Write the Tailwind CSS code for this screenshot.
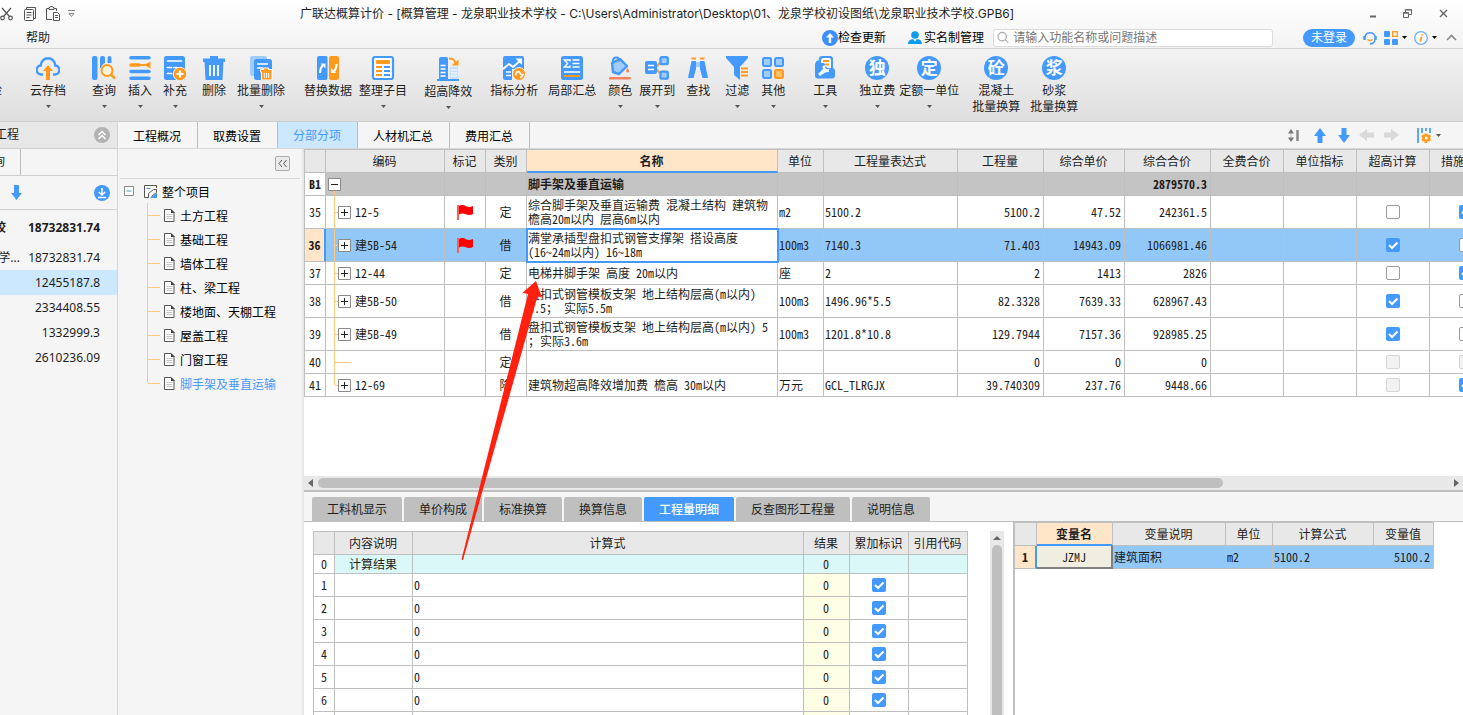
<!DOCTYPE html>
<html lang="zh-CN">
<head>
<meta charset="utf-8">
<title>广联达概算计价</title>
<script src="https://cdn.jsdelivr.net/npm/@tailwindcss/browser@4"></script>
</head>
<body class="h-screen overflow-hidden bg-[#f5f5f5] text-[12px] leading-4 text-[#1e1e1e] font-['Noto_Sans','Noto_Sans_CJK_SC',sans-serif]">

<!-- Shared symbols -->
<svg width="0" height="0" class="hidden">
  <symbol id="caret" viewBox="0 0 5 3"><path d="M0 0h5L2.500 3z" fill="currentColor"/></symbol>
  <symbol id="tick" viewBox="0 0 14 14"><path d="M3 7l3 3 5.500-5.500" fill="none" stroke="#fff" stroke-width="2"/></symbol>
  <symbol id="doc" viewBox="0 0 11 13"><path d="M.5.5h6.500l3 3v9H.5z" fill="#fff" stroke="#555"/><path d="M7 0v4h4z" fill="#444"/><path d="M2.500 5.500h6M2.500 7.500h6M2.500 9.500h6" stroke="#c4c4c4"/></symbol>
  <symbol id="flag" viewBox="0 0 16 16"><path d="M0 1h2v15H0z" fill="#ff5a5a"/><path d="M2 2c2-1.500 5-1 7 .2s5 .8 7-.2v8c-2 1.200-5 1.500-7 .3S4 9 2 10.500z" fill="red"/></symbol>
  <symbol id="plus" viewBox="0 0 13 13"><path d="M.5.5h12v12H.5z" fill="#fff" stroke="#8a8a8a"/><path d="M3 6.500h7M6.500 3v7" stroke="#222"/></symbol>
  <symbol id="minus" viewBox="0 0 13 13"><path d="M.5.5h12v12H.5z" fill="#fff" stroke="#8a8a8a"/><path d="M3 6.500h7" stroke="#222"/></symbol>
</svg>

<div class="flex h-full flex-col">

<!-- Title bar and menu -->
<header class="shrink-0 border-b border-[#d2d2d2] bg-linear-to-b from-white to-[#f3f3f3]">
  <div class="flex h-[27px] items-center">
    <div class="flex w-[300px] shrink-0 items-center">
      <svg width="13" height="14" viewBox="0 0 13 14" fill="none" stroke="#555" stroke-width="1.200"><path d="M2 1l7.500 8.500M11 1L3.500 9.500"/><circle cx="2.500" cy="11" r="1.800"/><circle cx="10.500" cy="11" r="1.800"/></svg>
      <svg class="ml-[11px]" width="12" height="14" viewBox="0 0 12 14" fill="none" stroke="#555"><path d="M2.500 2.500v-2h9v11h-2"/><rect x=".5" y="2.500" width="9" height="11" rx="1"/><path d="M2.500 5.500h5M2.500 8h5M2.500 10.500h3"/></svg>
      <svg class="ml-[10px]" width="14" height="15" viewBox="0 0 14 15" fill="none" stroke="#555"><path d="M6 13.500H.5v-11H3m5 0h2.500V5"/><path d="M3 3.500h5v-2H7l-.5-1h-2l-.5 1H3zM7.500 6.500h4l2 2v6h-6z"/><path d="M9 9.500h3M9 11.500h3"/></svg>
      <svg class="ml-2" width="7" height="8" viewBox="0 0 7 8" fill="none" stroke="#888"><path d="M0 .5h7M1 3.500l2.500 3 2.500-3z"/></svg>
    </div>
    <h1 class="whitespace-nowrap font-['Inter','Noto_Sans_CJK_SC',sans-serif]">广联达概算计价 - [概算管理 - 龙泉职业技术学校 - C:\Users\Administrator\Desktop\01、龙泉学校初设图纸\龙泉职业技术学校.GPB6]</h1>
    <div class="ml-auto flex items-center gap-[27px] pr-[15px] text-[#666]">
      <button aria-label="最小化"><svg width="6" height="8" viewBox="0 0 6 8"><path d="M0 6.500h6" stroke="currentColor" stroke-width="2"/></svg></button>
      <button aria-label="还原"><svg width="9" height="9" viewBox="0 0 9 9" fill="none" stroke="currentColor"><path d="M2.500 3V.5h6v5H6M2.500 1h6"/><path d="M.5 3.500h5v5h-5zM.5 4.200h5"/></svg></button>
      <button aria-label="关闭"><svg width="9" height="9" viewBox="0 0 9 9" stroke="currentColor" stroke-width="1.400"><path d="M1 1l7 7M8 1L1 8"/></svg></button>
    </div>
  </div>
  <div class="flex h-[21px] items-center">
    <button class="ml-[26px]">帮助</button>
    <div class="ml-auto flex items-center pr-[6px] text-black">
      <button class="flex items-center whitespace-nowrap"><svg width="16" height="16" viewBox="0 0 16 16"><circle cx="8" cy="8" r="8" fill="#3b8fff"/><path d="M8 3l4 4.500H9.200V13H6.800V7.500H4z" fill="#fff"/></svg>检查更新</button>
      <button class="ml-[22px] flex items-center gap-[2px] whitespace-nowrap"><svg width="14" height="13" viewBox="0 0 14 13" fill="#0b9bf0"><circle cx="7" cy="4" r="3.800"/><path d="M0 13c0-3 2-4.500 5-5l2 2.500L9 8c3 .5 5 2 5 5z"/></svg>实名制管理</button>
      <label class="ml-[9px] flex h-[18px] w-[280px] items-center rounded-[3px] border border-[#dcdcdc] bg-white pl-[3px]">
        <svg width="13" height="13" viewBox="0 0 13 13" fill="none" stroke="#aaa" stroke-width="1.300"><circle cx="5.500" cy="5.500" r="4.500"/><path d="M9 9l3 3"/></svg>
        <input aria-label="搜索" class="ml-1 w-full bg-transparent placeholder:text-[#777]" placeholder="请输入功能名称或问题描述">
      </label>
      <button class="ml-[30px] h-[18px] w-[52px] rounded-full bg-[#4499fc] text-white">未登录</button>
      <button aria-label="客服" class="ml-2"><svg width="14" height="14" viewBox="0 0 14 14" fill="none"><path d="M2 5.500a5.200 5.200 0 0 1 10 0" stroke="#4499fc" stroke-width="1.500"/><path d="M1.500 5v4M12.500 5v4" stroke="#4499fc" stroke-width="2.500"/><path d="M12 9c-.6 2.500-2.500 3.800-5 4" stroke="#4499fc" stroke-width="1.500"/><path d="M4.500 8.500c1.500 1.200 3.500 1.200 5 0" stroke="#ff9a1e" stroke-width="1.500"/></svg></button>
      <button aria-label="应用" class="ml-[7px] flex items-center gap-1"><svg width="14" height="14" viewBox="0 0 14 14"><g fill="#4499fc"><rect width="6" height="6" rx="1"/><rect y="8" width="6" height="6" rx="1"/><rect x="8" y="8" width="6" height="6" rx="1"/></g><rect x="8.700" y=".7" width="4.600" height="4.600" fill="#fff" stroke="#ff9a1e" stroke-width="1.400"/></svg><svg width="5" height="3"><use href="#caret"/></svg></button>
      <button aria-label="关于" class="ml-[7px] flex items-center gap-1"><svg width="14" height="14" viewBox="0 0 14 14"><circle cx="7" cy="7" r="6.300" fill="#fff" stroke="#6bb0fd" stroke-width="1.300"/><path d="M8.500 3l-.3 1.500M7.600 5.700L6.500 10.500" stroke="#ff9a1e" stroke-width="1.800"/></svg><svg width="5" height="3"><use href="#caret"/></svg></button>
      <button aria-label="收起功能区" class="ml-[9px]"><svg width="11" height="7" viewBox="0 0 11 7" fill="none" stroke="#888" stroke-width="1.600"><path d="M1 6l4.500-4.500L10 6"/></svg></button>
    </div>
  </div>
</header>

<!-- Ribbon -->
<nav class="flex h-[73px] shrink-0 items-start overflow-hidden border-b border-[#cdcdcd] bg-linear-to-b from-[#f3f3f3] to-[#dedede] pt-[7px] whitespace-nowrap">
  <button class="flex w-[2px] shrink-0 flex-col items-end pt-[27px]"><span>项目自检</span></button>
  <button class="ml-7 flex shrink-0 flex-col items-center"><svg width="24" height="24" viewBox="0 0 24 24"><path d="M7 18.500H5.500A4.500 4.500 0 0 1 4.800 9.500a7.200 7.200 0 0 1 14.400 0 4.500 4.500 0 0 1-.7 9H17" fill="none" stroke="#4499fc" stroke-width="2.400"/><path d="M12 9l5 6h-3v9h-4v-9H7z" fill="#ff9a1e"/></svg><span class="mt-[3px]">云存档</span><svg class="mt-[6px] text-[#555]" width="5" height="3"><use href="#caret"/></svg></button>
  <button class="ml-[26px] flex shrink-0 flex-col items-center"><svg width="24" height="24" viewBox="0 0 24 24"><rect x="0" y="0" width="5.500" height="24" rx="2" fill="#4499fc"/><path d="M8 2q0-2 2-2h1q2 0 2 2v5q-3 1-4 5H8zM15.500 2q0-2 2-2 2 0 2 2v5h-4z" fill="#4499fc"/><circle cx="15" cy="14.500" r="5.500" fill="#fff3e0" stroke="#ff9a1e" stroke-width="2"/><path d="M19 18.500l4 4" stroke="#ff9a1e" stroke-width="2.500"/></svg><span class="mt-[3px]">查询</span><svg class="mt-[6px] text-[#555]" width="5" height="3"><use href="#caret"/></svg></button>
  <button class="ml-3 flex shrink-0 flex-col items-center"><svg width="24" height="24" viewBox="0 0 24 24"><path d="M3 1.800h18M3 15.500h18M3 22.200h18" stroke="#4499fc" stroke-width="3.500" stroke-linecap="round"/><path d="M3 9h8" stroke="#ff9a1e" stroke-width="3.500" stroke-linecap="round"/><path d="M22.500 5.500v7L16 9z" fill="#ff9a1e"/><path d="M11 9h6" stroke="#ff9a1e" stroke-width="2"/></svg><span class="mt-[3px]">插入</span><svg class="mt-[6px] text-[#555]" width="5" height="3"><use href="#caret"/></svg></button>
  <button class="ml-[11px] flex shrink-0 flex-col items-center"><svg width="24" height="24" viewBox="0 0 24 24"><rect x="1" y="0" width="21" height="24" rx="2.500" fill="#4499fc"/><path d="M4.500 5h14M4.500 11.500h4M11 11.500h3M4.500 17.500h4" stroke="#fff" stroke-width="1.700" stroke-linecap="round"/><circle cx="17" cy="18" r="6.700" fill="#ff9a1e" stroke="#f3f3f3"/><path d="M17 14.500v7M13.500 18h7" stroke="#fff" stroke-width="2.200"/></svg><span class="mt-[3px]">补充</span><svg class="mt-[6px] text-[#555]" width="5" height="3"><use href="#caret"/></svg></button>
  <button class="ml-[15px] flex shrink-0 flex-col items-center"><svg width="24" height="24" viewBox="0 0 24 24"><path d="M1 2.500h7V0h8v2.500h7v3.500H1zM2.500 5h19l-1 19h-17z" fill="#4499fc"/><path d="M8 9v11M12 9v11M16 9v11" stroke="#fff" stroke-width="1.800"/></svg><span class="mt-[3px]">删除</span></button>
  <button class="ml-[11px] flex shrink-0 flex-col items-center"><svg width="24" height="24" viewBox="0 0 24 24"><rect x="1" y="0" width="17" height="20" rx="2.500" fill="#9fcbfd"/><rect x="5" y="3" width="18" height="21" rx="2.500" fill="#4499fc"/><path d="M8 8h11M8 12h6" stroke="#fff" stroke-width="1.500"/><path d="M11.500 13.500h3V12h5v1.500h3.500V24H12.500V16h-1z" fill="#ff9a1e" stroke="#fff"/><path d="M15.300 17v5M17.500 17v5M19.700 17v5" stroke="#fff"/></svg><span class="mt-[3px]">批量删除</span><svg class="mt-[6px] text-[#555]" width="5" height="3"><use href="#caret"/></svg></button>
  <button class="ml-[19px] flex shrink-0 flex-col items-center"><svg width="24" height="24" viewBox="0 0 24 24"><rect x="1" width="10.500" height="24" rx="2" fill="#4499fc"/><rect x="13" width="10" height="24" rx="2" fill="#ff9a1e"/><path d="M4 17c0-4 1-6 3-8" fill="none" stroke="#fff" stroke-width="2"/><path d="M4.500 7.500h5v5z" fill="#fff"/><path d="M20.500 8c0 4-1 6-3 8" fill="none" stroke="#fff" stroke-width="2"/><path d="M15 12v5h5z" fill="#fff"/></svg><span class="mt-[3px]">替换数据</span></button>
  <button class="ml-[7px] flex shrink-0 flex-col items-center"><svg width="24" height="24" viewBox="0 0 24 24"><rect x="2" y="1" width="20" height="22" rx="2" fill="#fff" stroke="#4499fc" stroke-width="2.200"/><rect x="5" y="4" width="14" height="4" rx="1" fill="#ff9a1e"/><path d="M5 11h6M5 15h6M5 19h6" stroke="#ff9a1e" stroke-width="1.800"/><path d="M13 11h6M13 15h6M13 19h6" stroke="#4499fc" stroke-width="1.800"/></svg><span class="mt-[3px]">整理子目</span><svg class="mt-[6px] text-[#555]" width="5" height="3"><use href="#caret"/></svg></button>
  <button class="mt-px ml-[17px] flex shrink-0 flex-col items-center"><svg width="24" height="24" viewBox="0 0 24 24"><path d="M3 2q0-2 2-2h5q2 0 2 2v21H3zM1 22h22v2H1z" fill="#4499fc"/><path d="M4.500 8.500h5M4.500 12h5M4.500 15.500h5M4.500 19h5" stroke="#fff" stroke-width="1.700"/><path d="M14 10h8v12h-8z" fill="#c4e0fe"/><path d="M15 13h6M15 16h6M15 19h6" stroke="#fff"/><path d="M13 1.500c4 0 5.500 1 6.500 4.500" fill="none" stroke="#ff9a1e" stroke-width="2"/><path d="M22.500 2.500v6h-7z" fill="#ff9a1e"/></svg><span class="mt-[3px]">超高降效</span><svg class="mt-[6px] text-[#555]" width="5" height="3"><use href="#caret"/></svg></button>
  <button class="ml-[18px] flex shrink-0 flex-col items-center"><svg width="24" height="24" viewBox="0 0 24 24"><path d="M1 2q0-2 2-2h17q2 0 2 2v11H10v11H3q-2 0-2-2z" fill="#4499fc"/><path d="M1 13l6-5 4 3 7-6" fill="none" stroke="#fff" stroke-width="2"/><path d="M13.500 2.500H20V9z" fill="#fff"/><path d="M4 16h5M4 19.500h5" stroke="#fff" stroke-width="1.500"/><circle cx="17" cy="18" r="6.500" fill="#ff9a1e" stroke="#f3f3f3"/><path d="M14 19.500v-1.500c0-1.500 1-2.500 3-2.500l1.500 2.500c1 0 2 0 2.500.5-.5 2-1.500 2.500-3 3" fill="none" stroke="#fff" stroke-width="1.500"/></svg><span class="mt-[3px]">指标分析</span></button>
  <button class="ml-[10px] flex shrink-0 flex-col items-center"><svg width="24" height="24" viewBox="0 0 24 24"><rect x="1" width="22" height="24" rx="2.500" fill="#4499fc"/><path d="M10 5.500V4H4.500l3 3.500-3 3.500H10V9.500" fill="none" stroke="#fff" stroke-width="1.500"/><path d="M12.500 4h7M12.500 7.500h7M12.500 11h7M4 16h16" stroke="#fff" stroke-width="1.700"/><path d="M4 20h16" stroke="#ff9a1e" stroke-width="2"/></svg><span class="mt-[3px]">局部汇总</span></button>
  <button class="ml-3 flex shrink-0 flex-col items-center"><svg width="24" height="24" viewBox="0 0 24 24"><path d="M4 7l8-4 7 7-8 8-6-2z" fill="#9fcbfd" stroke="#4499fc" stroke-width="2.400" stroke-linejoin="round"/><path d="M5 8V4q1-3 4-2.500 2.500.5 2.500 4" fill="none" stroke="#4499fc" stroke-width="2"/><path d="M19.500 12q2.500 3 1.200 4.200-1.200.8-2.200-.2-1-1.200 1-4z" fill="#f5855f"/><rect x="1" y="21" width="22" height="2.600" rx="1.300" fill="#f5855f"/></svg><span class="mt-[3px]">颜色</span><svg class="mt-[6px] text-[#555]" width="5" height="3"><use href="#caret"/></svg></button>
  <button class="ml-[7px] flex shrink-0 flex-col items-center"><svg width="24" height="24" viewBox="0 0 24 24"><path d="M11 11l6-6M11 13l6 6" stroke="#ff9a1e" stroke-width="1.800"/><rect x="0" y="5" width="12" height="13" rx="2" fill="#4499fc"/><path d="M3 9.500h6M3 13.500h6" stroke="#fff" stroke-width="1.500"/><rect x="15.500" y="1.200" width="7.300" height="7" rx="1.500" fill="#9fcbfd" stroke="#4499fc" stroke-width="2.300"/><rect x="15.500" y="15.700" width="7.300" height="7" rx="1.500" fill="#9fcbfd" stroke="#4499fc" stroke-width="2.300"/></svg><span class="mt-[3px]">展开到</span><svg class="mt-[6px] text-[#555]" width="5" height="3"><use href="#caret"/></svg></button>
  <button class="ml-[11px] flex shrink-0 flex-col items-center"><svg width="24" height="24" viewBox="0 0 24 24"><path d="M5.500 5h4.500v8l-2.500 9H2zM18.500 5H14v8l2.500 9H22z" fill="#4499fc"/><path d="M5.500 2.500h4.500M14 2.500h4.500" stroke="#ff9a1e" stroke-width="2"/><path d="M10 6h4v5h-4z" fill="#9fcbfd"/></svg><span class="mt-[3px]">查找</span></button>
  <button class="ml-[15px] flex shrink-0 flex-col items-center"><svg width="24" height="24" viewBox="0 0 24 24"><path d="M1 0h22v2l-8 9v13l-6-5v-8L1 2z" fill="#4499fc"/><path d="M15 10h9v11h-9z" fill="#efefef"/><path d="M16 12.500h7M16 16h7M16 19.500h7" stroke="#ff9a1e" stroke-width="1.800"/></svg><span class="mt-[3px]">过滤</span><svg class="mt-[6px] text-[#555]" width="5" height="3"><use href="#caret"/></svg></button>
  <button class="ml-3 flex shrink-0 flex-col items-center"><svg width="24" height="24" viewBox="0 0 24 24" stroke-width="2"><g fill="#9fcbfd" stroke="#4499fc"><rect x="2" y="2" width="8" height="8" rx="1.500"/><rect x="14" y="2" width="8" height="8" rx="1.500"/><rect x="2" y="14" width="8" height="8" rx="1.500"/></g><rect x="14" y="14" width="8" height="8" rx="1.500" fill="#fdbf69" stroke="#ff9a1e"/></svg><span class="mt-[3px]">其他</span><svg class="mt-[6px] text-[#555]" width="5" height="3"><use href="#caret"/></svg></button>
  <button class="ml-7 flex shrink-0 flex-col items-center"><svg width="24" height="24" viewBox="0 0 24 24"><path d="M2 9q0-4 4-5V3q0-3 3-3h8q3 0 3 3v9q2 .5 2 2.500v5q0 3-3 3H5q-3 0-3-3z" fill="#4499fc"/><path d="M8 4.500Q8 2 10.500 2H16q2 0 2 2v8h-4l-3-5H8z" fill="#fff"/><path d="M10 5h6M12 8.500h4" stroke="#ff9a1e" stroke-width="2"/><path d="M5 18l5-5-.5-3 3.500-1-1 3 2 1.500 2.500-1-1 3.500-3.500.5L7 20z" fill="#fff"/></svg><span class="mt-[3px]">工具</span><svg class="mt-[6px] text-[#555]" width="5" height="3"><use href="#caret"/></svg></button>
  <button class="ml-[22px] flex shrink-0 flex-col items-center"><span class="flex size-6 items-center justify-center rounded-full bg-[#4499fc] text-[17px] font-bold text-white">独</span><span class="mt-[3px]">独立费</span><svg class="mt-[6px] text-[#555]" width="5" height="3"><use href="#caret"/></svg></button>
  <button class="ml-1 flex shrink-0 flex-col items-center"><span class="flex size-6 items-center justify-center rounded-full bg-[#4499fc] text-[17px] font-bold text-white">定</span><span class="mt-[3px]">定额一单位</span><svg class="mt-[6px] text-[#555]" width="5" height="3"><use href="#caret"/></svg></button>
  <button class="ml-[13px] flex shrink-0 flex-col items-center"><span class="flex size-6 items-center justify-center rounded-full bg-[#4499fc] text-[17px] font-bold text-white">砼</span><span class="mt-[3px]">混凝土<br>批量换算</span></button>
  <button class="ml-[10px] flex shrink-0 flex-col items-center"><span class="flex size-6 items-center justify-center rounded-full bg-[#4499fc] text-[17px] font-bold text-white">浆</span><span class="mt-[3px]">砂浆<br>批量换算</span></button>
</nav>

<div class="flex min-h-0 flex-1">

  <!-- Project totals -->
  <aside class="w-[118px] shrink-0 overflow-hidden border-r border-[#d4d4d4] whitespace-nowrap">
    <div class="flex h-[27px] items-center justify-between border-b border-[#cfcfcf] bg-[#e7e7e7] pr-[7px]">
      <span class="flex w-[19px] justify-end">工程</span>
      <button aria-label="折叠"><svg width="16" height="16" viewBox="0 0 16 16"><circle cx="8" cy="8" r="8" fill="#b3b3b3"/><path d="M4.500 8L8 4.500 11.500 8M4.500 12L8 8.500l3.500 3.500" fill="none" stroke="#fff" stroke-width="1.500"/></svg></button>
    </div>
    <div class="flex h-[27px] border-b border-[#d0d0d0]">
      <button class="flex w-[21px] items-center border-r border-[#bdbdbd]"><span class="flex w-[5px] justify-end">查询</span></button>
    </div>
    <div class="flex h-[34px] items-center justify-between border-b border-[#d0d0d0] pr-[7px] pl-[11px]">
      <button aria-label="下移"><svg width="11" height="15" viewBox="0 0 11 15"><path d="M3 0h5v8h3l-5.500 7L0 8h3z" fill="#4499fc"/></svg></button>
      <button aria-label="下载"><svg width="16" height="16" viewBox="0 0 16 16"><circle cx="8" cy="8" r="8" fill="#4499fc"/><path d="M8 3v7M4.800 7L8 10l3.200-3M4 12.500h8" fill="none" stroke="#fff" stroke-width="1.500"/></svg></button>
    </div>
    <div class="flex h-[35px] items-center justify-between pr-[17px] font-bold"><span class="flex w-[6px] justify-end">校</span><span>18732831.74</span></div>
    <div class="flex h-[25px] items-center justify-between pr-[17px]"><span class="flex w-[20px] justify-end">学...</span><span>18732831.74</span></div>
    <div class="flex h-[25px] items-center justify-end bg-[#cbe8ff] pr-[17px]">12455187.8</div>
    <div class="flex h-[25px] items-center justify-end pr-[17px]">2334408.55</div>
    <div class="flex h-[25px] items-center justify-end pr-[17px]">1332999.3</div>
    <div class="flex h-[25px] items-center justify-end pr-[17px]">2610236.09</div>
  </aside>

  <div class="flex min-w-0 flex-1 flex-col">
    <!-- Page tabs -->
    <div class="flex h-[27px] shrink-0 border-b border-[#d8d8d8] text-black">
      <button class="border-r border-[#bdbdbd] pt-[3px] pr-4 pl-[15px]">工程概况</button>
      <button class="border-r border-[#bdbdbd] pt-[3px] pr-4 pl-[15px]">取费设置</button>
      <button class="border-r border-[#bdbdbd] bg-[#cbe8ff] pt-[2px] pr-4 pl-[15px] text-[#4499fc]">分部分项</button>
      <button class="border-r border-[#bdbdbd] pt-[3px] pr-4 pl-[15px]">人材机汇总</button>
      <button class="border-r border-[#bdbdbd] pt-[3px] pr-4 pl-[15px]">费用汇总</button>
      <div class="ml-auto flex items-center pr-[22px]">
        <button aria-label="行高"><svg width="12" height="13" viewBox="0 0 12 13"><path d="M0 4.500h6L3 0zM0 8.500h6L3 13z" fill="#777"/><path d="M3 4v5" stroke="#bbb"/><path d="M9.500 1v11" stroke="#888" stroke-width="2.500"/></svg></button>
        <button aria-label="上移" class="ml-[14px]"><svg width="12" height="15" viewBox="0 0 12 15"><path d="M3.500 15h5V8H12L6 0 0 8h3.500z" fill="#4499fc"/></svg></button>
        <button aria-label="下移" class="ml-3"><svg width="12" height="15" viewBox="0 0 12 15"><path d="M3.500 0h5v7H12l-6 8-6-8h3.500z" fill="#4499fc"/></svg></button>
        <button aria-label="升级" class="ml-[9px]"><svg width="15" height="12" viewBox="0 0 15 12"><path d="M0 6l8-6v3.500h7v5H8V12z" fill="#d9d9d9"/></svg></button>
        <button aria-label="降级" class="ml-[10px]"><svg width="15" height="12" viewBox="0 0 15 12"><path d="M15 6L7 0v3.500H0v5h7V12z" fill="#d9d9d9"/></svg></button>
        <button aria-label="列设置" class="ml-[18px] flex items-center gap-[5px]"><svg width="14" height="15" viewBox="0 0 14 15"><path d="M1 0v15M5 0v5M9 0v3M13 0v5" stroke="#4499fc" stroke-width="1.700"/><path d="M7.500 5.500h3v1.500l2.300-.5 1.200 2-1.200 1.500 1.200 1.500-1.200 2-2.300-.5V15h-3v-2l-2 .5-1-2L5.500 10 4.500 8.500l1-2 2 .5z" fill="#ff9a1e"/><circle cx="9.200" cy="10" r="1.500" fill="#fff"/></svg><svg class="text-[#555]" width="5" height="3"><use href="#caret"/></svg></button>
      </div>
    </div>

    <div class="flex min-h-0 flex-1">
      <!-- Section tree -->
      <aside class="w-[186px] shrink-0 border-r-2 border-[#e8e8e8] text-black">
        <div class="mr-[2px] ml-[2px] flex h-[30px] items-center justify-end border-b border-[#d8d8d8] pr-[10px]">
          <button aria-label="收起" class="flex size-[15px] items-center justify-center rounded-[2px] border border-[#aaa] bg-[#ebebeb]"><svg width="9" height="7" viewBox="0 0 9 7" fill="none" stroke="#555"><path d="M4 0L1 3.500 4 7M8.500 0l-3 3.500 3 3.500"/></svg></button>
        </div>
        <div class="flex h-6 items-center pl-[6px]"><svg width="10" height="10" viewBox="0 0 10 10"><path d="M.5.5h9v9h-9z" fill="#fff" stroke="#8a8a8a"/><path d="M2.500 5h5" stroke="#3aa0c8"/></svg><svg class="ml-[10px]" width="13" height="13" viewBox="0 0 13 13"><path d="M12.500 3V.5H.5v12h4" fill="#fff" stroke="#555"/><path d="M2.500 3.500h4" stroke="#4499fc"/><path d="M4.500 12.500v-4l5-4h3v3l-5 4" fill="none" stroke="#555"/><path d="M6 13l7-5v5z" fill="#4499fc"/></svg><span class="ml-[5px] pt-[3px]">整个项目</span></div>
        <ul>
          <li class="flex h-6 items-center pl-[29px]"><i class="w-px self-stretch bg-[#fdc97a]"></i><i class="h-px w-3 bg-[#fdc97a]"></i><svg class="ml-1" width="11" height="13"><use href="#doc"/></svg><span class="ml-[5px] pt-[3px]">土方工程</span></li>
          <li class="flex h-6 items-center pl-[29px]"><i class="w-px self-stretch bg-[#fdc97a]"></i><i class="h-px w-3 bg-[#fdc97a]"></i><svg class="ml-1" width="11" height="13"><use href="#doc"/></svg><span class="ml-[5px] pt-[3px]">基础工程</span></li>
          <li class="flex h-6 items-center pl-[29px]"><i class="w-px self-stretch bg-[#fdc97a]"></i><i class="h-px w-3 bg-[#fdc97a]"></i><svg class="ml-1" width="11" height="13"><use href="#doc"/></svg><span class="ml-[5px] pt-[3px]">墙体工程</span></li>
          <li class="flex h-6 items-center pl-[29px]"><i class="w-px self-stretch bg-[#fdc97a]"></i><i class="h-px w-3 bg-[#fdc97a]"></i><svg class="ml-1" width="11" height="13"><use href="#doc"/></svg><span class="ml-[5px] pt-[3px]">柱、梁工程</span></li>
          <li class="flex h-6 items-center pl-[29px]"><i class="w-px self-stretch bg-[#fdc97a]"></i><i class="h-px w-3 bg-[#fdc97a]"></i><svg class="ml-1" width="11" height="13"><use href="#doc"/></svg><span class="ml-[5px] pt-[3px]">楼地面、天棚工程</span></li>
          <li class="flex h-6 items-center pl-[29px]"><i class="w-px self-stretch bg-[#fdc97a]"></i><i class="h-px w-3 bg-[#fdc97a]"></i><svg class="ml-1" width="11" height="13"><use href="#doc"/></svg><span class="ml-[5px] pt-[3px]">屋盖工程</span></li>
          <li class="flex h-6 items-center pl-[29px]"><i class="w-px self-stretch bg-[#fdc97a]"></i><i class="h-px w-3 bg-[#fdc97a]"></i><svg class="ml-1" width="11" height="13"><use href="#doc"/></svg><span class="ml-[5px] pt-[3px]">门窗工程</span></li>
          <li class="flex h-6 items-center pl-[29px] text-[#4499fc]"><i class="h-3 w-px self-start bg-[#fdc97a]"></i><i class="h-px w-3 bg-[#fdc97a]"></i><svg class="ml-1" width="11" height="13"><use href="#doc"/></svg><span class="ml-[5px] pt-[3px]">脚手架及垂直运输</span></li>
        </ul>
      </aside>

      <main class="flex min-w-0 flex-1 flex-col">
        <!-- Bill of quantities -->
        <div class="h-[327px] shrink-0 overflow-hidden bg-white">
          <table class="w-[1209px] table-fixed border-separate border-spacing-0 border-t border-l border-[#bfbfbf] leading-[14px] whitespace-nowrap font-['Noto_Sans_Mono_CJK_SC','Liberation_Mono','Noto_Sans_CJK_SC',monospace] [&_td]:border-r [&_td]:border-b [&_td]:border-[#bfbfbf] [&_th]:border-r [&_th]:border-b [&_th]:border-[#bfbfbf]">
            <colgroup><col class="w-[21px]"><col class="w-[119px]"><col class="w-[41px]"><col class="w-[41px]"><col class="w-[251px]"><col class="w-[46px]"><col class="w-[134px]"><col class="w-[86px]"><col class="w-[81px]"><col class="w-[86px]"><col class="w-[73px]"><col class="w-[73px]"><col class="w-[73px]"><col></colgroup>
            <thead>
              <tr class="h-[23px] bg-[#e8e8e8] [&>th]:pr-px [&>th]:font-normal">
                <th></th><th>编码</th><th>标记</th><th>类别</th>
                <th class="border-b-2! border-b-[#4499fc]! bg-[#ffe6c8] font-bold!">名称</th>
                <th>单位</th><th>工程量表达式</th><th>工程量</th><th>综合单价</th><th>综合合价</th><th>全费合价</th><th>单位指标</th><th>超高计算</th><th class="pl-[11px] text-left">措施项目</th>
              </tr>
            </thead>
            <tbody>
              <tr class="h-[23px] bg-[#c4c4c4] font-bold">
                <td class="bg-white text-center">B1</td>
                <td><div class="flex h-[22px] w-[15px] flex-col items-center justify-end pl-[2px]"><svg class="shrink-0" width="13" height="13"><use href="#minus"/></svg><i class="h-1 w-px bg-[#fdc97a]"></i></div></td>
                <td></td><td></td><td class="pl-[1px]">脚手架及垂直运输</td><td></td><td></td><td></td><td></td><td class="pr-[3px] text-right">2879570.3</td><td></td><td></td><td></td><td></td>
              </tr>
              <tr class="h-[33px]">
                <td class="text-center">35</td>
                <td><div class="flex h-8 items-center pl-2"><i class="w-px self-stretch bg-[#fdc97a]"></i><i class="h-px w-[3px] bg-[#fdc97a]"></i><svg width="13" height="13"><use href="#plus"/></svg><span class="ml-1">12-5</span></div></td>
                <td><svg class="mx-auto" width="16" height="16"><use href="#flag"/></svg></td><td class="pr-px text-center">定</td>
                <td class="pl-[1px]">综合脚手架及垂直运输费 混凝土结构 建筑物<br>檐高20m以内 层高6m以内</td>
                <td class="pl-[1px]">m2</td><td class="pl-[1px]">5100.2</td><td class="pr-[3px] text-right">5100.2</td><td class="pr-[3px] text-right">47.52</td><td class="pr-[3px] text-right">242361.5</td><td></td><td></td>
                <td><input type="checkbox" aria-label="超高计算" class="mx-auto block size-[14px] appearance-none rounded-[2px] border border-[#9a9a9a] bg-white"></td>
                <td><span class="ml-[29px] grid size-[14px]"><input type="checkbox" checked aria-label="措施项目" class="size-[14px] appearance-none rounded-[2px] bg-[#4499fc] [grid-area:1/1]"><svg class="pointer-events-none [grid-area:1/1]" width="14" height="14"><use href="#tick"/></svg></span></td>
              </tr>
              <tr class="h-[33px] bg-[#92c8f7]">
                <td class="border-r-2! border-r-[#4499fc]! bg-[#ffe6c8] text-center font-bold">36</td>
                <td><div class="flex h-8 items-center pl-2"><i class="w-px self-stretch bg-[#fdc97a]"></i><i class="h-px w-[3px] bg-[#fdc97a]"></i><svg width="13" height="13"><use href="#plus"/></svg><span class="ml-1">建5B-54</span></div></td>
                <td><svg class="mx-auto" width="16" height="16"><use href="#flag"/></svg></td><td class="pr-px text-center">借</td>
                <td class="bg-white pl-[1px] outline-2 -outline-offset-1 outline-[#4499fc]">满堂承插型盘扣式钢管支撑架 搭设高度<br>(16~24m以内) 16~18m</td>
                <td class="pl-[1px]">100m3</td><td class="pl-[1px]">7140.3</td><td class="pr-[3px] text-right">71.403</td><td class="pr-[3px] text-right">14943.09</td><td class="pr-[3px] text-right">1066981.46</td><td></td><td></td>
                <td><span class="mx-auto grid size-[14px]"><input type="checkbox" checked aria-label="超高计算" class="size-[14px] appearance-none rounded-[2px] bg-[#4499fc] [grid-area:1/1]"><svg class="pointer-events-none [grid-area:1/1]" width="14" height="14"><use href="#tick"/></svg></span></td>
                <td><input type="checkbox" aria-label="措施项目" class="ml-[29px] block size-[14px] appearance-none rounded-[2px] border border-[#9a9a9a] bg-white"></td>
              </tr>
              <tr class="h-[23px]">
                <td class="text-center">37</td>
                <td><div class="flex h-[22px] items-center pl-2"><i class="w-px self-stretch bg-[#fdc97a]"></i><i class="h-px w-[3px] bg-[#fdc97a]"></i><svg width="13" height="13"><use href="#plus"/></svg><span class="ml-1">12-44</span></div></td>
                <td></td><td class="pr-px text-center">定</td>
                <td class="pl-[1px]">电梯井脚手架 高度 20m以内</td>
                <td class="pl-[1px]">座</td><td class="pl-[1px]">2</td><td class="pr-[3px] text-right">2</td><td class="pr-[3px] text-right">1413</td><td class="pr-[3px] text-right">2826</td><td></td><td></td>
                <td><input type="checkbox" aria-label="超高计算" class="mx-auto block size-[14px] appearance-none rounded-[2px] border border-[#9a9a9a] bg-white"></td>
                <td><span class="ml-[29px] grid size-[14px]"><input type="checkbox" checked aria-label="措施项目" class="size-[14px] appearance-none rounded-[2px] bg-[#4499fc] [grid-area:1/1]"><svg class="pointer-events-none [grid-area:1/1]" width="14" height="14"><use href="#tick"/></svg></span></td>
              </tr>
              <tr class="h-[33px]">
                <td class="text-center">38</td>
                <td><div class="flex h-8 items-center pl-2"><i class="w-px self-stretch bg-[#fdc97a]"></i><i class="h-px w-[3px] bg-[#fdc97a]"></i><svg width="13" height="13"><use href="#plus"/></svg><span class="ml-1">建5B-50</span></div></td>
                <td></td><td class="pr-px text-center">借</td>
                <td class="pl-[1px]">盘扣式钢管模板支架 地上结构层高(m以内)<br>3.5； 实际5.5m</td>
                <td class="pl-[1px]">100m3</td><td class="pl-[1px]">1496.96*5.5</td><td class="pr-[3px] text-right">82.3328</td><td class="pr-[3px] text-right">7639.33</td><td class="pr-[3px] text-right">628967.43</td><td></td><td></td>
                <td><span class="mx-auto grid size-[14px]"><input type="checkbox" checked aria-label="超高计算" class="size-[14px] appearance-none rounded-[2px] bg-[#4499fc] [grid-area:1/1]"><svg class="pointer-events-none [grid-area:1/1]" width="14" height="14"><use href="#tick"/></svg></span></td>
                <td><input type="checkbox" aria-label="措施项目" class="ml-[29px] block size-[14px] appearance-none rounded-[2px] border border-[#9a9a9a] bg-white"></td>
              </tr>
              <tr class="h-[33px]">
                <td class="text-center">39</td>
                <td><div class="flex h-8 items-center pl-2"><i class="w-px self-stretch bg-[#fdc97a]"></i><i class="h-px w-[3px] bg-[#fdc97a]"></i><svg width="13" height="13"><use href="#plus"/></svg><span class="ml-1">建5B-49</span></div></td>
                <td></td><td class="pr-px text-center">借</td>
                <td class="pl-[1px]">盘扣式钢管模板支架 地上结构层高(m以内) 5<br>；实际3.6m</td>
                <td class="pl-[1px]">100m3</td><td class="pl-[1px]">1201.8*10.8</td><td class="pr-[3px] text-right">129.7944</td><td class="pr-[3px] text-right">7157.36</td><td class="pr-[3px] text-right">928985.25</td><td></td><td></td>
                <td><span class="mx-auto grid size-[14px]"><input type="checkbox" checked aria-label="超高计算" class="size-[14px] appearance-none rounded-[2px] bg-[#4499fc] [grid-area:1/1]"><svg class="pointer-events-none [grid-area:1/1]" width="14" height="14"><use href="#tick"/></svg></span></td>
                <td><input type="checkbox" aria-label="措施项目" class="ml-[29px] block size-[14px] appearance-none rounded-[2px] border border-[#9a9a9a] bg-white"></td>
              </tr>
              <tr class="h-[23px]">
                <td class="text-center">40</td>
                <td><div class="flex h-[22px] items-center pl-2"><i class="w-px self-stretch bg-[#fdc97a]"></i><i class="h-px w-4 bg-[#fdc97a]"></i></div></td>
                <td></td><td class="pr-px text-center">定</td><td></td><td></td><td></td><td class="pr-[3px] text-right">0</td><td class="pr-[3px] text-right">0</td><td class="pr-[3px] text-right">0</td><td></td><td></td>
                <td><input type="checkbox" disabled aria-label="超高计算" class="mx-auto block size-[14px] appearance-none rounded-[2px] border border-[#d6d6d6] bg-[#f2f2f2]"></td>
                <td><input type="checkbox" disabled aria-label="措施项目" class="ml-[29px] block size-[14px] appearance-none rounded-[2px] border border-[#d6d6d6] bg-[#f2f2f2]"></td>
              </tr>
              <tr class="h-[23px]">
                <td class="text-center">41</td>
                <td><div class="flex h-[22px] items-center pl-2"><i class="h-[11px] w-px self-start bg-[#fdc97a]"></i><i class="h-px w-[3px] bg-[#fdc97a]"></i><svg width="13" height="13"><use href="#plus"/></svg><span class="ml-1">12-69</span></div></td>
                <td></td><td class="pr-px text-center">降</td>
                <td class="pl-[1px]">建筑物超高降效增加费 檐高 30m以内</td>
                <td class="pl-[1px]">万元</td><td class="pl-[1px]">GCL_TLRGJX</td><td class="pr-[3px] text-right">39.740309</td><td class="pr-[3px] text-right">237.76</td><td class="pr-[3px] text-right">9448.66</td><td></td><td></td>
                <td><input type="checkbox" disabled aria-label="超高计算" class="mx-auto block size-[14px] appearance-none rounded-[2px] border border-[#d6d6d6] bg-[#f2f2f2]"></td>
                <td><span class="ml-[29px] grid size-[14px]"><input type="checkbox" checked aria-label="措施项目" class="size-[14px] appearance-none rounded-[2px] bg-[#4499fc] [grid-area:1/1]"><svg class="pointer-events-none [grid-area:1/1]" width="14" height="14"><use href="#tick"/></svg></span></td>
              </tr>
            </tbody>
          </table>
        </div>
        <div class="flex h-[14px] shrink-0 items-center bg-[#e8e8e8] px-1">
          <svg width="5" height="8" viewBox="0 0 5 8"><path d="M5 0v8L0 4z" fill="#666"/></svg>
          <div class="mx-[5px] flex-1"><div class="h-[10px] w-4/5 rounded-full bg-[#bfbfbf]"></div></div>
          <svg width="5" height="8" viewBox="0 0 5 8"><path d="M0 0v8l5-4z" fill="#666"/></svg>
        </div>

        <!-- Detail tabs -->
        <div class="flex h-[32px] shrink-0 items-end gap-[2px] border-t-2 border-b border-[#bfbfbf] pl-2">
          <button class="h-6 rounded-t-[2px] bg-[#bfbfbf] px-[15px] pt-[2px]">工料机显示</button>
          <button class="h-6 rounded-t-[2px] bg-[#bfbfbf] px-[15px] pt-[2px]">单价构成</button>
          <button class="h-6 rounded-t-[2px] bg-[#bfbfbf] px-[15px] pt-[2px]">标准换算</button>
          <button class="h-6 rounded-t-[2px] bg-[#bfbfbf] px-[15px] pt-[2px]">换算信息</button>
          <button class="h-6 rounded-t-[2px] bg-[#4499fc] px-[15px] pt-[2px] font-medium text-white">工程量明细</button>
          <button class="h-6 rounded-t-[2px] bg-[#bfbfbf] px-[15px] pt-[2px]">反查图形工程量</button>
          <button class="h-6 rounded-t-[2px] bg-[#bfbfbf] px-[15px] pt-[2px]">说明信息</button>
        </div>

        <div class="flex min-h-0 flex-1 bg-white whitespace-nowrap font-['Noto_Sans_Mono_CJK_SC','Liberation_Mono','Noto_Sans_CJK_SC',monospace] leading-[14px]">
          <!-- Quantity formulas -->
          <div class="flex w-[709px] shrink-0 items-stretch pt-[9px] pl-[9px]">
            <div class="overflow-hidden">
            <table class="w-[655px] table-fixed border-separate border-spacing-0 border-t border-l border-[#bfbfbf] text-center [&_td]:border-r [&_td]:border-b [&_td]:border-[#bfbfbf] [&_th]:border-r [&_th]:border-b [&_th]:border-[#bfbfbf]">
              <colgroup><col class="w-[21px]"><col class="w-[78px]"><col class="w-[391px]"><col class="w-[46px]"><col class="w-[59px]"><col></colgroup>
              <thead><tr class="h-[23px] bg-[#e8e8e8] [&>th]:pr-px [&>th]:font-normal"><th></th><th>内容说明</th><th>计算式</th><th>结果</th><th>累加标识</th><th>引用代码</th></tr></thead>
              <tbody>
                <tr class="h-[19px] bg-[#daf8f8]"><td class="bg-white">0</td><td class="pr-px">计算结果</td><td></td><td class="pr-px">0</td><td></td><td></td></tr>
                <tr class="h-[23px]"><td>1</td><td></td><td class="pl-[1px] text-left">0</td><td class="bg-[#ffffe6] pr-px">0</td><td><span class="mx-auto grid size-[14px]"><input type="checkbox" checked aria-label="累加标识" class="size-[14px] appearance-none rounded-[2px] bg-[#4499fc] [grid-area:1/1]"><svg class="pointer-events-none [grid-area:1/1]" width="14" height="14"><use href="#tick"/></svg></span></td><td></td></tr>
                <tr class="h-[23px]"><td>2</td><td></td><td class="pl-[1px] text-left">0</td><td class="bg-[#ffffe6] pr-px">0</td><td><span class="mx-auto grid size-[14px]"><input type="checkbox" checked aria-label="累加标识" class="size-[14px] appearance-none rounded-[2px] bg-[#4499fc] [grid-area:1/1]"><svg class="pointer-events-none [grid-area:1/1]" width="14" height="14"><use href="#tick"/></svg></span></td><td></td></tr>
                <tr class="h-[23px]"><td>3</td><td></td><td class="pl-[1px] text-left">0</td><td class="bg-[#ffffe6] pr-px">0</td><td><span class="mx-auto grid size-[14px]"><input type="checkbox" checked aria-label="累加标识" class="size-[14px] appearance-none rounded-[2px] bg-[#4499fc] [grid-area:1/1]"><svg class="pointer-events-none [grid-area:1/1]" width="14" height="14"><use href="#tick"/></svg></span></td><td></td></tr>
                <tr class="h-[23px]"><td>4</td><td></td><td class="pl-[1px] text-left">0</td><td class="bg-[#ffffe6] pr-px">0</td><td><span class="mx-auto grid size-[14px]"><input type="checkbox" checked aria-label="累加标识" class="size-[14px] appearance-none rounded-[2px] bg-[#4499fc] [grid-area:1/1]"><svg class="pointer-events-none [grid-area:1/1]" width="14" height="14"><use href="#tick"/></svg></span></td><td></td></tr>
                <tr class="h-[23px]"><td>5</td><td></td><td class="pl-[1px] text-left">0</td><td class="bg-[#ffffe6] pr-px">0</td><td><span class="mx-auto grid size-[14px]"><input type="checkbox" checked aria-label="累加标识" class="size-[14px] appearance-none rounded-[2px] bg-[#4499fc] [grid-area:1/1]"><svg class="pointer-events-none [grid-area:1/1]" width="14" height="14"><use href="#tick"/></svg></span></td><td></td></tr>
                <tr class="h-[23px]"><td>6</td><td></td><td class="pl-[1px] text-left">0</td><td class="bg-[#ffffe6] pr-px">0</td><td><span class="mx-auto grid size-[14px]"><input type="checkbox" checked aria-label="累加标识" class="size-[14px] appearance-none rounded-[2px] bg-[#4499fc] [grid-area:1/1]"><svg class="pointer-events-none [grid-area:1/1]" width="14" height="14"><use href="#tick"/></svg></span></td><td></td></tr>
                <tr class="h-[23px]"><td></td><td></td><td></td><td class="bg-[#ffffe6]"></td><td></td><td></td></tr>
              </tbody>
            </table>
            </div>
            <div class="ml-[22px] flex w-[14px] flex-col items-center bg-[#e8e8e8] pt-[5px]">
              <svg width="8" height="4" viewBox="0 0 8 4"><path d="M0 4h8L4 0z" fill="#666"/></svg>
              <div class="mt-[5px] w-[10px] flex-1 rounded-t-full bg-[#bfbfbf]"></div>
            </div>
          </div>
          <!-- Variables -->
          <div class="flex-1 overflow-hidden border-l-2 border-[#bfbfbf]">
            <table class="w-[419px] table-fixed border-separate border-spacing-0 border-t border-[#bfbfbf] [&_td]:border-r [&_td]:border-b [&_td]:border-[#bfbfbf] [&_th]:border-r [&_th]:border-b [&_th]:border-[#bfbfbf]">
              <colgroup><col class="w-[22px]"><col class="w-[76px]"><col class="w-[113px]"><col class="w-[47px]"><col class="w-[101px]"><col></colgroup>
              <thead><tr class="h-[23px] bg-[#e8e8e8] [&>th]:pr-px [&>th]:font-normal"><th></th><th class="border-b-2! border-b-[#4499fc]! bg-[#ffe6c8] font-bold!">变量名</th><th>变量说明</th><th>单位</th><th>计算公式</th><th>变量值</th></tr></thead>
              <tbody><tr class="h-[23px] bg-[#92c8f7]"><td class="border-r-2! border-r-[#4499fc]! bg-[#ffe6c8] text-center font-bold">1</td><td class="border-r-2! border-b-2! border-r-[#808080]! border-b-[#808080]! bg-[#f0eee0] text-center">JZMJ</td><td class="pl-[1px]">建筑面积</td><td class="pl-[1px]">m2</td><td class="pl-[1px]">5100.2</td><td class="pr-[3px] text-right">5100.2</td></tr></tbody>
            </table>
          </div>
        </div>
      </main>
    </div>
  </div>
</div>
</div>

<!-- Annotation arrow over the grids -->
<svg class="pointer-events-none absolute top-[280px] left-[460px]" width="84" height="282" viewBox="460 280 84 282" aria-hidden="true"><path d="M536 281l6 16.500-4.500-1L463 560l-1.500-.5L528 294l-5.500-1.200z" fill="#ff2010"/></svg>
</body>
</html>
